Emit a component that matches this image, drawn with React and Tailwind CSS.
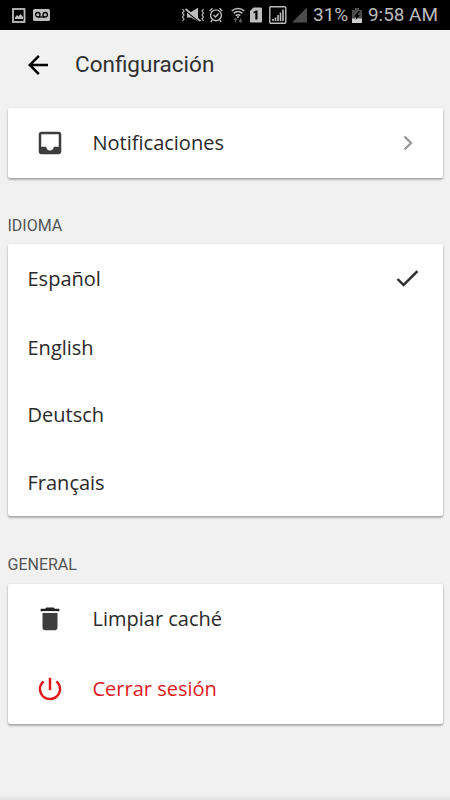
import React, { useState } from "react";
import { MdArrowBack, MdInbox, MdPowerSettingsNew } from "react-icons/md";

const languages = [
  { id: "es", name: "Español", row: "h-[70px]" },
  { id: "en", name: "English", row: "h-[68px]" },
  { id: "de", name: "Deutsch", row: "h-[67px]" },
  { id: "fr", name: "Français", row: "h-[68.5px]" },
];

const StatusBar = () => {
  return (
    <div className="flex h-[30px] items-center bg-black pl-3 pr-[12px] text-[#bdbdbd]">
      {/* screenshot */}
      <svg className="h-[15px] w-[14px]" viewBox="0 0 14 15" fill="none">
        <rect x="1" y="1" width="11.5" height="13" stroke="currentColor" strokeWidth="1.8" />
        <path d="M3 11V9.5L5 7l1.5 1.5L8.500 6 11 9v2z" fill="currentColor" />
      </svg>
      {/* voicemail */}
      <svg className="ml-[7px] h-3 w-[17px]" viewBox="0 0 17 12" fill="none">
        <rect width="17" height="12" rx="1.5" fill="currentColor" />
        <circle cx="4.800" cy="5.700" r="2.200" stroke="#000" strokeWidth="1.300" />
        <circle cx="12.200" cy="5.700" r="2.200" stroke="#000" strokeWidth="1.300" />
        <path d="M4.800 8h7.400" stroke="#000" strokeWidth="1.300" />
      </svg>

      <div className="ml-auto flex items-center">
        {/* vibrate, muted */}
        <svg className="h-4 w-[24px]" viewBox="0 0 24 16" fill="none" stroke="currentColor">
          <path d="M1.500 2l1.500 2-1.500 2L3 8l-1.500 2L3 12l-1.500 2M22.500 2L21 4l1.500 2L21 8l1.500 2-1.500 2 1.500 2" strokeWidth="1.200" />
          <path d="M6 5h4L17 .8v14L10 10.500H6z" fill="currentColor" stroke="none" />
          <path d="M4.500 3.600L19 15.600" stroke="#000" strokeWidth="1.300" />
          <path d="M4.500 2L19.500 14.200" strokeWidth="1.700" />
        </svg>
        {/* alarm */}
        <svg className="ml-1 h-4 w-[14px]" viewBox="0 0 14 16" fill="none" stroke="currentColor" strokeWidth="1.400">
          <circle cx="7" cy="8.300" r="5.400" />
          <path d="M.7 4L3.500 1.300M13.300 4L10.500 1.300M3.200 13L1.800 15M10.800 13l1.400 2M4.500 8l2 2L9.700 6.500" />
        </svg>
        {/* wifi */}
        <svg className="ml-[8px] h-4 w-[14px]" viewBox="0 0 14 16" fill="none" stroke="currentColor" strokeWidth="1.500">
          <path d="M.7 4c3.500-3.500 9.100-3.500 12.600 0M2.700 6.400c2.400-2.400 6.200-2.400 8.600 0M4.700 8.600c1.300-1.300 3.300-1.300 4.600 0" />
          <circle cx="7" cy="10" r="1" fill="currentColor" stroke="none" />
          <path d="M4.500 15.500v-4M3 13l1.500-1.700L6 13M9.500 11v4M8 13.500l1.500 1.700 1.500-1.700" stroke="#555" strokeWidth="1.200" />
        </svg>
        {/* sim 1 */}
        <svg className="ml-[5px] h-4 w-[12px]" viewBox="0 0 12 16">
          <path d="M3.500.5H11a1 1 0 011 1v13a1 1 0 01-1 1H1a1 1 0 01-1-1V4z" fill="currentColor" />
          <path d="M3.500 4.800L6 3.500h1.500v9H5.300V5.800l-1.800.7z" fill="#000" />
        </svg>
        {/* signal */}
        <svg className="ml-[7px] h-[18px] w-[18px]" viewBox="0 0 18 18" fill="none" stroke="currentColor">
          <rect x=".8" y=".8" width="16" height="16.400" rx="1" strokeWidth="1.400" />
          <path d="M4 15v-2M6.500 15v-3.500M9 15V9M11.500 15V6.500M14 15V3.500" strokeWidth="1.600" />
        </svg>
        <svg className="ml-[5px] h-4 w-[15px]" viewBox="0 0 15 16">
          <path d="M15 .5V15.500H0z" fill="#4c4c4c" />
        </svg>
        <span className="ml-[6px] w-[35px] whitespace-nowrap text-[19px] leading-[30px]">31%</span>
        {/* battery */}
        <svg className="ml-[4px] h-[15px] w-[10px]" viewBox="0 0 10 15">
          <path d="M0 2h3V0h4v2h3v13H0z" fill="#4c4c4c" />
          <path d="M0 10.500h10V15H0z" fill="#cfcfcf" />
          <path d="M6.500 3L2 8.500h2.500L3.500 12 8 7H5.500L8 3z" fill="#000" />
        </svg>
        <span className="ml-[6px] w-[70px] whitespace-nowrap text-[18.900px] leading-[30px]">9:58 AM</span>
      </div>
    </div>
  );
};

const Card = ({ children, className }) => {
  return (
    <div
      className={`mx-[7.5px] rounded-[2px] bg-white shadow-[0_2px_2px_0_rgba(0,0,0,0.18),0_1px_3px_0_rgba(0,0,0,0.22)] ${className}`}
    >
      {children}
    </div>
  );
};

const App = () => {
  const [language, setLanguage] = useState("es");

  return (
    <div className="flex h-[800px] w-[450px] flex-col overflow-hidden bg-[#f1f1f1] font-['Roboto',sans-serif]">
      <StatusBar />

      <header className="flex h-[70px] items-center pl-[22.500px]">
        <button type="button">
          <MdArrowBack className="size-[30px] text-black" />
        </button>
        <h1 className="ml-[22.500px] text-[22.500px] font-[370] text-[#303030]">Configuración</h1>
      </header>

      <Card className="mt-[7.500px] h-[70px]">
        <button
          type="button"
          className="flex h-full w-full items-center pl-[27px] pr-[29px] font-['Open_Sans',sans-serif] text-[20px] text-[#2a2a2a]"
        >
          <MdInbox className="size-[30px] text-[#3d3d3d]" />
          <span className="ml-[28px]">Notificaciones</span>
          <svg className="ml-auto h-4 w-[12px]" viewBox="0 0 12 16" fill="none">
            <path d="M2.500 1.500L9 8l-6.500 6.500" stroke="#999" strokeWidth="2.300" />
          </svg>
        </button>
      </Card>

      <h2 className="mt-[36px] h-[30px] pl-[7.500px] text-[16px] font-[370] leading-6 text-[#555]">IDIOMA</h2>
      <Card className="h-[272.500px]">
        <ul className="font-['Open_Sans',sans-serif] text-[20px] text-[#2a2a2a]">
          {languages.map((item) => (
            <li key={item.id}>
              <button
                type="button"
                onClick={() => setLanguage(item.id)}
                className={`flex w-full items-center pl-[20px] pr-[20.500px] ${item.row}`}
              >
                {item.name}
                {language === item.id && (
                  <svg className="ml-auto size-[29px]" viewBox="0 0 512 512" fill="#303030">
                    <path d="M186.300 339.900L96 249.500l-32 30.500L186.300 402 448 140.500 416 110z" />
                  </svg>
                )}
              </button>
            </li>
          ))}
        </ul>
      </Card>

      <h2 className="mt-[37px] h-[30.500px] pl-[7.500px] text-[16px] font-[370] leading-6 text-[#555]">GENERAL</h2>
      <Card className="h-[140px]">
        <div className="font-['Open_Sans',sans-serif] text-[20px]">
          <button type="button" className="flex h-[70px] w-full items-center pl-[27px] text-[#2a2a2a]">
            <svg className="size-[30px]" viewBox="0 0 512 512" fill="#3d3d3d">
              <path d="M128 405.400C128 428.800 147.200 448 170.700 448h170.600c23.500 0 42.700-19.200 42.700-42.600V150H128z" />
              <path d="M416 82h-80l-18-22H194l-18 22H96v42h320z" fill="#202020" />
              <path d="M128 126h256v24H128z" fill="#fff" />
            </svg>
            <span className="ml-[28px]">Limpiar caché</span>
          </button>
          <button type="button" className="flex h-[70px] w-full items-center pl-[27px] text-[#e0181c]">
            <MdPowerSettingsNew className="size-[30px]" />
            <span className="ml-[28px]">Cerrar sesión</span>
          </button>
        </div>
      </Card>

      <div className="mt-auto h-[6px] bg-linear-to-b from-[#f1f1f1] to-[#e2e2e2]" />
    </div>
  );
};

export default App;
